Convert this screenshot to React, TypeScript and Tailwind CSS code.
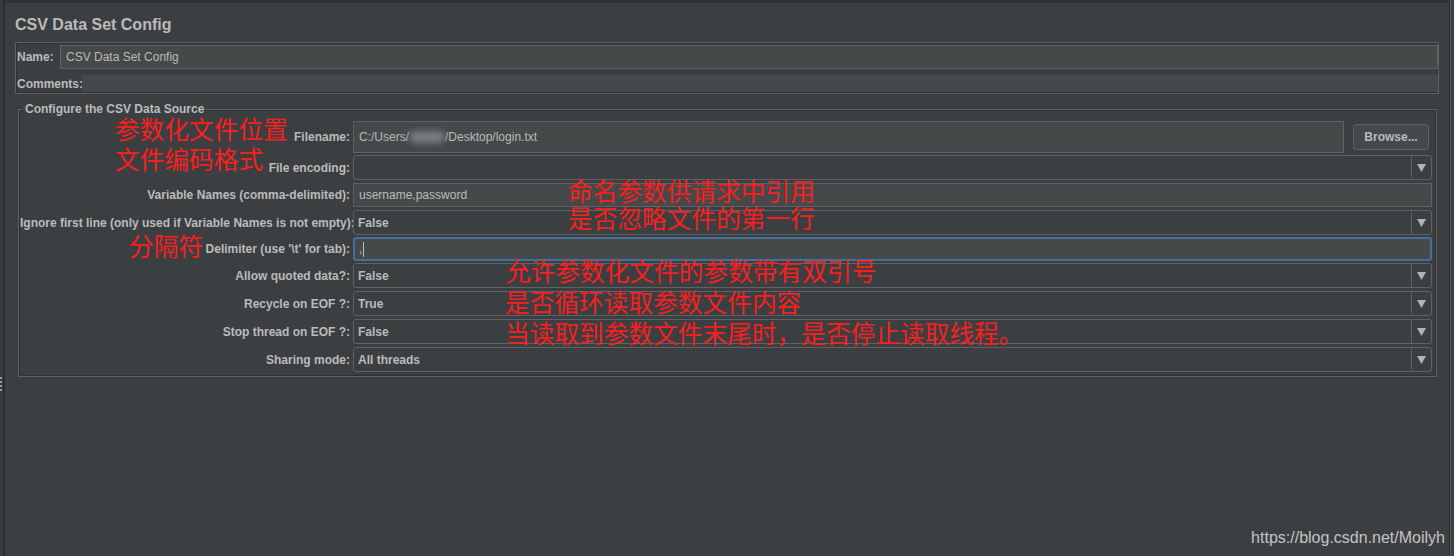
import React from 'react';

type Row = {
  label: string;
  kind: 'text' | 'combo' | 'focus';
  value: string;
  box: string;
};

const rows: Row[] = [
  { label: 'File encoding:', kind: 'combo', value: '', box: 'mt-[2px] h-[25px]' },
  { label: 'Variable Names (comma-delimited):', kind: 'text', value: 'username,password', box: 'mt-[3px] h-[24px]' },
  { label: 'Ignore first line (only used if Variable Names is not empty):', kind: 'combo', value: 'False', box: 'mt-[3px] h-[25px]' },
  { label: "Delimiter (use '\\t' for tab):", kind: 'focus', value: ',', box: 'mt-[2px] h-[24px]' },
  { label: 'Allow quoted data?:', kind: 'combo', value: 'False', box: 'mt-[2px] h-[25px]' },
  { label: 'Recycle on EOF ?:', kind: 'combo', value: 'True', box: 'mt-[3px] h-[25px]' },
  { label: 'Stop thread on EOF ?:', kind: 'combo', value: 'False', box: 'mt-[3px] h-[25px]' },
  { label: 'Sharing mode:', kind: 'combo', value: 'All threads', box: 'mt-[3px] h-[25px]' },
];

// red notes drawn over the screenshot
const notes = [
  { text: '参数化文件位置', cls: 'left-[115px] top-[116px]' },
  { text: '文件编码格式', cls: 'left-[115px] top-[146px]' },
  { text: '命名参数供请求中引用', cls: 'left-[568px] top-[178px]' },
  { text: '是否忽略文件的第一行', cls: 'left-[568px] top-[205px]' },
  { text: '分隔符', cls: 'left-[129px] top-[233px]' },
  { text: '允许参数化文件的参数带有双引号', cls: 'left-[506px] top-[258px]' },
  { text: '是否循环读取参数文件内容', cls: 'left-[505px] top-[289px]' },
  { text: '当读取到参数文件末尾时，是否停止读取线程。', cls: 'left-[505px] top-[320px]' },
];

const Arrow = () => (
  <svg width="9" height="8" viewBox="0 0 9 8">
    <polygon points="0,0 9,0 4.5,8" fill="#b4b4b4" />
  </svg>
);

const Field: React.FC<{ row: Row }> = ({ row }) => {
  if (row.kind === 'combo') {
    return (
      <div className="flex-1 h-full flex border border-[#5f6264] rounded-[3px] bg-[#3c3f41]">
        <div className="flex-1 flex items-center pl-[4px] font-bold">{row.value}</div>
        <div className="w-[20px] border-l border-[#5f6264] flex items-center justify-center">
          <Arrow />
        </div>
      </div>
    );
  }
  if (row.kind === 'focus') {
    return (
      <div className="flex-1 h-full flex items-center border-2 border-[#46709c] rounded-[3px] bg-[#45494a] pl-[4px]">
        <span>{row.value}</span>
        <span className="w-px h-[15px] bg-[#bbbbbb] ml-[1px]" />
      </div>
    );
  }
  return (
    <div className="flex-1 h-full flex items-center border border-[#5f6264] bg-[#45494a] pl-[5px]">
      {row.value}
    </div>
  );
};

export default function App() {
  return (
    <div className="relative w-[1454px] h-[556px] overflow-hidden flex bg-[#3c3f41] text-[12px] text-[#bbbbbb] font-['Liberation_Sans',Arial,sans-serif]">
      <div className="relative w-[5px] shrink-0 bg-[#393c3e] border-r-2 border-[#2b2d2e]">
        <div className="absolute left-0 top-[377px] flex flex-col gap-[2px]">
          <span className="w-[2px] h-[2px] bg-[#9a9a9a]" />
          <span className="w-[2px] h-[2px] bg-[#9a9a9a]" />
          <span className="w-[2px] h-[2px] bg-[#9a9a9a]" />
          <span className="w-[2px] h-[2px] bg-[#9a9a9a]" />
        </div>
      </div>

      <div className="flex-1 flex flex-col border-t-[3px] border-[#303234] pl-[10px] pr-[10px]">
        <div className="pt-[12px] h-[32px] text-[16px] leading-[20px] font-bold">CSV Data Set Config</div>

        <div className="mt-[7px] border border-[#5e6163] shadow-[inset_0_0_0_1px_#303234] pt-[2px] pb-[1px]">
          <div className="flex items-center h-[24px] pl-[1px]">
            <span className="font-bold w-[43px] shrink-0">Name:</span>
            <div className="flex-1 h-full flex items-center border border-[#5f6264] bg-[#45494a] pl-[5px]">
              CSV Data Set Config
            </div>
          </div>
          <div className="flex items-center h-[17px] mt-[6px] pl-[1px]">
            <span className="font-bold w-[65px] shrink-0">Comments:</span>
            <div className="flex-1 h-full bg-[#45494a]" />
          </div>
        </div>

        <fieldset className="mt-[7px] ml-[3px] mr-[2px] border border-[#5e6163] shadow-[inset_0_0_0_1px_#303234] pl-[1px] pr-[4px] pt-[4px] pb-[4px]">
          <legend className="ml-[3px] px-[2px] leading-[16px] font-bold bg-[#3c3f41]">
            Configure the CSV Data Source
          </legend>

          <div className="flex items-center h-[32px]">
            <div className="w-[333px] shrink-0 pr-[3px] text-right font-bold">Filename:</div>
            <div className="flex-1 h-full flex items-center border border-[#5f6264] bg-[#45494a] pl-[5px]">
              <span>C:/Users/</span>
              <span className="inline-block w-[36px] h-[12px] rounded-full bg-[#7a7d7f] blur-[3px]" />
              <span>/Desktop/login.txt</span>
            </div>
            <button className="ml-[9px] mr-[3px] w-[76px] h-[26px] rounded-[3px] border border-[#5f6264] bg-[#45494b] font-bold text-[#bbbbbb]">
              Browse...
            </button>
          </div>

          {rows.map((row) => (
            <div key={row.label} className={`flex items-center ${row.box}`}>
              <div className="w-[333px] shrink-0 pr-[3px] text-right font-bold whitespace-nowrap">{row.label}</div>
              <Field row={row} />
            </div>
          ))}
        </fieldset>
      </div>

      <div className="w-[5px] shrink-0 border-l border-[#2b2d2e]">
        <div className="h-full border-l border-[#55585a]" />
      </div>

      {notes.map((n) => (
        <div
          key={n.text}
          className={`absolute ${n.cls} text-[24.7px] leading-none text-[#fa1e1e] whitespace-nowrap font-['Noto_Sans_CJK_SC',sans-serif]`}
        >
          {n.text}
        </div>
      ))}

      <div className="absolute right-[9px] bottom-[8px] text-[16px] leading-[20px] text-[#c4c4c4] font-['Liberation_Sans',Arial,sans-serif]">
        https://blog.csdn.net/Moilyh
      </div>
    </div>
  );
}
